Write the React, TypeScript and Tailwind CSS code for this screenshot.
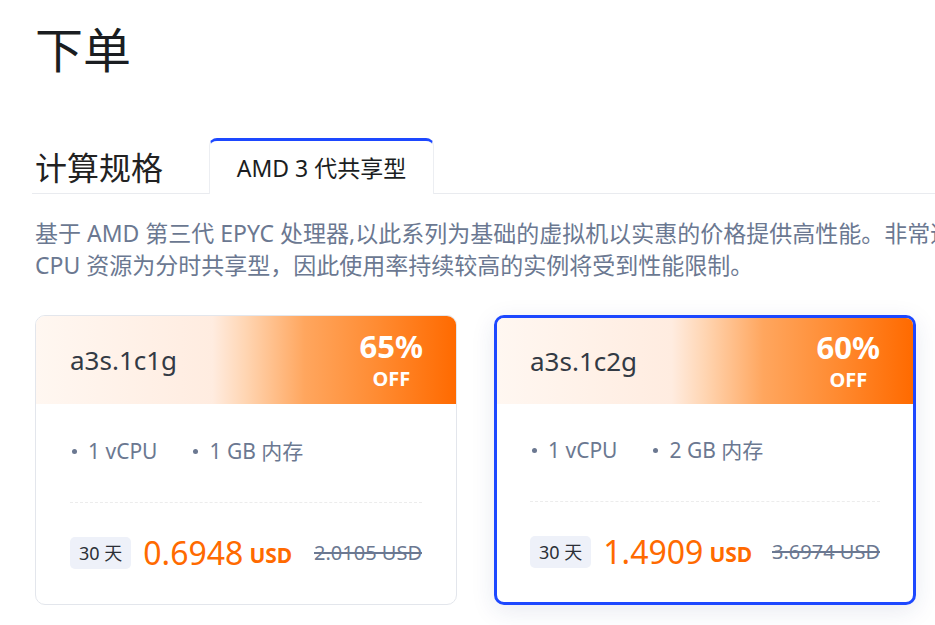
import React from "react";

const font = { fontFamily: '"Noto Sans", "Noto Sans CJK SC", sans-serif' };

type Plan = { name: string; off: string; mem: string; price: string; orig: string; active?: boolean };

function Card({ p }: { p: Plan }) {
  return (
    <div
      className={
        "w-[422px] h-[290px] shrink-0 rounded-[10px] overflow-hidden bg-white flex flex-col " +
        (p.active
          ? "border-[3px] border-[#1d48ff] shadow-[0_6px_24px_rgba(30,50,120,0.10)]"
          : "border border-[#e3e6ec]")
      }
    >
      <div
        className={
          "shrink-0 flex items-center justify-between pr-[33px] bg-[linear-gradient(to_right,#fff7f1_0%,#ffece0_42%,#ffd5b2_50%,#ffa65e_64%,#ff8a30_82%,#ff6a00_100%)] " +
          (p.active ? "h-[86px] pl-[33px]" : "h-[88px] pl-[34px]")
        }
      >
        <span className="text-[26px] leading-[30px] text-[#333a44]">{p.name}</span>
        <div className="flex flex-col items-center text-white font-bold">
          <span className="text-[31px] leading-[34px]">{p.off}</span>
          <span className="text-[20px] leading-[26px] mt-[3px]">OFF</span>
        </div>
      </div>
      <div className={"flex flex-col " + (p.active ? "px-[33px] pt-[34px]" : "px-[34px] pt-[35px]")}>
        <div className="flex items-center gap-[36px] text-[21px] leading-[24px] text-[#6b7891]">
          <div className="flex items-center gap-[11px] pl-[2px]">
            <span className="w-[5px] h-[5px] rounded-full bg-[#6b7891]" />
            <span>1 vCPU</span>
          </div>
          <div className="flex items-center gap-[11px]">
            <span className="w-[5px] h-[5px] rounded-full bg-[#6b7891]" />
            <span>{p.mem}</span>
          </div>
        </div>
        <div className="mt-[39px] border-t border-dashed border-[#ececec]" />
        <div className="mt-[34px] flex items-center h-[32px]">
          <span className="h-[32px] px-[9px] rounded-[5px] bg-[#eef1f9] text-[18px] leading-[32px] text-[#2b2f36]">
            30 天
          </span>
          <span className="ml-[12px] text-[32px] leading-[32px] text-[#ff6a00]">{p.price}</span>
          <span className="ml-[6px] mt-[4px] text-[21px] leading-[24px] font-bold text-[#ff6a00]">USD</span>
          <span className="ml-auto text-[20px] leading-[24px] text-[#6b7891] line-through">{p.orig}</span>
        </div>
      </div>
    </div>
  );
}

export default function App() {
  const plans: Plan[] = [
    { name: "a3s.1c1g", off: "65%", mem: "1 GB 内存", price: "0.6948", orig: "2.0105 USD" },
    { name: "a3s.1c2g", off: "60%", mem: "2 GB 内存", price: "1.4909", orig: "3.6974 USD", active: true },
  ];
  return (
    <div style={font} className="w-[935px] h-[625px] overflow-hidden bg-white pl-[35px] pt-[26px] text-[#1f2329]">
      <h1 className="text-[48px] leading-[48px] text-[#1a1d21] font-normal">下单</h1>
      <div className="mt-[64px] flex items-end h-[56px] border-b border-[#e9ebef] -ml-[3px] pl-[3px]">
        <span className="text-[32px] leading-[40px] pb-[5px] text-[#222]">计算规格</span>
        <div className="ml-[46px] w-[225px] h-[56px] -mb-[1px] bg-white rounded-t-[8px] border-t-[3px] border-t-[#1d48ff] border-x border-x-[#eceef2] flex items-center justify-center">
          <span className="text-[23px] leading-[28px] text-[#1a1d21]">AMD 3 代共享型</span>
        </div>
      </div>
      <div className="mt-[23px] text-[23px] leading-[32px] text-[#6b7891] whitespace-nowrap">
        <div>基于 AMD 第三代 EPYC 处理器,以此系列为基础的虚拟机以实惠的价格提供高性能。非常适合中低负载的应用场景。</div>
        <div>CPU 资源为分时共享型，因此使用率持续较高的实例将受到性能限制。</div>
      </div>
      <div className="mt-[34px] flex gap-[37px]">
        {plans.map((p) => (
          <Card key={p.name} p={p} />
        ))}
      </div>
    </div>
  );
}
